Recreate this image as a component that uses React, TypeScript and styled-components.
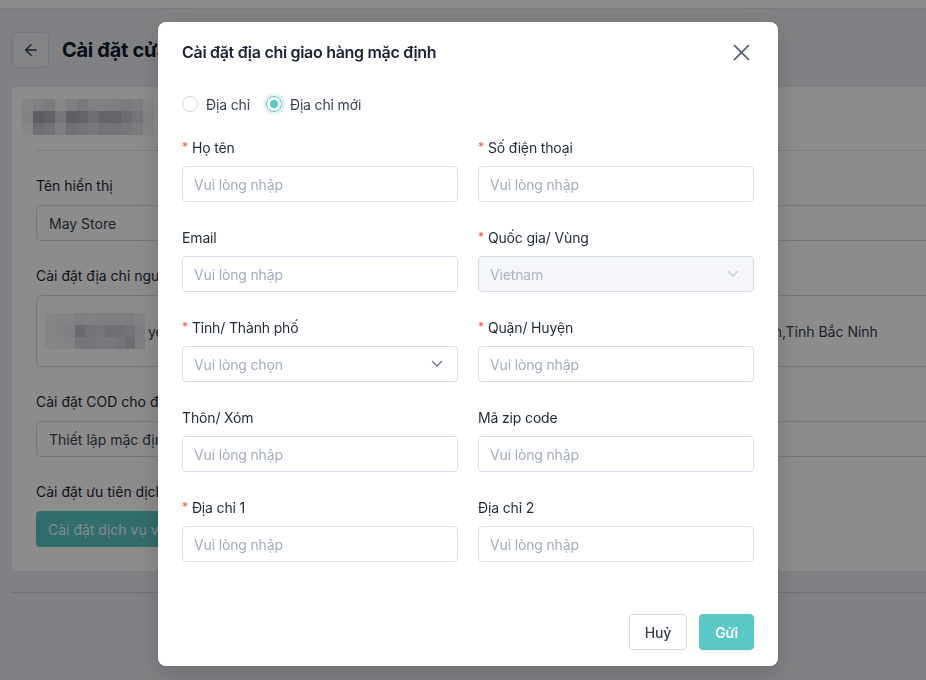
import styled, { createGlobalStyle } from 'styled-components';

const GlobalStyle = createGlobalStyle`
  html, body {
    margin: 0;
    padding: 0;
    overflow: hidden;
    background: #e9ecf1;
  }
  body {
    font-family: Inter, "Noto Sans", "Liberation Sans", sans-serif;
    color: #1f2937;
    -webkit-font-smoothing: antialiased;
  }
  * { box-sizing: border-box; }
`;

const TEAL = '#5ac8c4';

/* ---------- page behind the dialog ---------- */

const Page = styled.div`
  width: 1180px;
  height: 680px;
  background: #e9ecf1;
`;

const TopBar = styled.div`
  height: 9px;
  background: #fff;
  border-bottom: 1px solid #dde2e8;
`;

const Main = styled.main`
  padding: 23px 0 0 12px;
`;

const TitleRow = styled.div`
  display: flex;
  align-items: center;
  gap: 13px;
  height: 36px;
`;

const BackButton = styled.button`
  width: 37px;
  height: 36px;
  display: flex;
  align-items: center;
  justify-content: center;
  background: #eef0f4;
  border: 1px solid #d3d9e2;
  border-radius: 4px;
  color: #374151;
  padding: 0;
`;

const PageTitle = styled.h1`
  margin: 0;
  font-size: 20px;
  font-weight: 700;
  letter-spacing: -0.3px;
  color: #111827;
`;

const Card = styled.section`
  margin-top: 19px;
  background: #fff;
  border-radius: 4px;
`;

const CardHead = styled.div`
  padding-top: 12px;
  height: 64px;
  margin-left: 24px;
  border-bottom: 1px solid #e3e6ea;
  & > * {
    margin-left: -14px;
  }
`;

const Mosaic = styled.div<{ $cols: number; $cell: number }>`
  display: grid;
  grid-template-columns: repeat(${(p) => p.$cols}, ${(p) => p.$cell}px);
  grid-auto-rows: 12px;
  flex-shrink: 0;
`;

const Cell = styled.span<{ $c: string }>`
  background: ${(p) => p.$c};
`;

const CardBody = styled.div`
  padding: 25px 24px 24px;
  display: flex;
  flex-direction: column;
`;

const BgLabel = styled.div`
  font-size: 14px;
  line-height: 20px;
  color: #1f2937;
  margin-bottom: 9px;
`;

const BgInput = styled.div<{ $tall?: boolean }>`
  height: ${(p) => (p.$tall ? '72px' : '36px')};
  border: 1px solid #d3dbe6;
  border-radius: ${(p) => (p.$tall ? '6px' : '4px')};
  display: flex;
  align-items: center;
  padding: 0 ${(p) => (p.$tall ? '8px' : '12px')};
  font-size: 14px;
  color: #374151;
  white-space: nowrap;
  overflow: hidden;
  margin-bottom: 25px;
`;

const AddressText = styled.span`
  margin-left: 3px;
`;

const BgButton = styled.div`
  height: 36px;
  width: 240px;
  background: ${TEAL};
  color: #eefaf9;
  border-radius: 4px;
  display: flex;
  align-items: center;
  padding: 0 12px;
  font-size: 14px;
`;

const BottomRule = styled.div`
  margin-top: 21px;
  height: 1px;
  background: #c9ced6;
`;

/* ---------- dialog ---------- */

const Overlay = styled.div`
  position: fixed;
  inset: 0;
  background: rgba(0, 0, 0, 0.45);
  display: flex;
  justify-content: center;
  align-items: flex-start;
  padding: 22px 0 0 10px;
`;

const Dialog = styled.div`
  width: 620px;
  height: 644px;
  background: #fff;
  border-radius: 8px;
  box-shadow: 0 8px 28px rgba(0, 0, 0, 0.18);
  padding: 18px 24px 16px;
  display: flex;
  flex-direction: column;
  letter-spacing: -0.15px;
`;

const DialogHead = styled.div`
  display: flex;
  align-items: center;
  justify-content: space-between;
  height: 24px;
`;

const DialogTitle = styled.h2`
  margin: 0;
  font-size: 16px;
  font-weight: 600;
  letter-spacing: -0.3px;
  color: #1a2233;
`;

const CloseButton = styled.button`
  width: 24px;
  height: 24px;
  margin-right: 1px;
  padding: 0;
  border: 0;
  background: none;
  display: flex;
  align-items: center;
  justify-content: center;
  color: #4b5563;
`;

const RadioGroup = styled.div`
  display: flex;
  align-items: center;
  gap: 16px;
  margin-top: 30px;
  height: 20px;
`;

const RadioOption = styled.label`
  display: flex;
  align-items: center;
  gap: 8px;
  font-size: 14px;
  color: #374151;
`;

const RadioDot = styled.span<{ $on?: boolean }>`
  width: 16px;
  height: 16px;
  border-radius: 50%;
  border: 1px solid ${(p) => (p.$on ? TEAL : '#cfd8e3')};
  background: #fff;
  display: flex;
  align-items: center;
  justify-content: center;
  box-shadow: ${(p) => (p.$on ? '0 0 0 3px rgba(90, 200, 196, 0.16)' : 'none')};
  &::after {
    content: '';
    width: 8px;
    height: 8px;
    border-radius: 50%;
    background: ${(p) => (p.$on ? TEAL : 'transparent')};
  }
`;

const FormGrid = styled.div`
  margin-top: 23px;
  display: grid;
  grid-template-columns: 276px 276px;
  column-gap: 20px;
  row-gap: 25px;
`;

const Field = styled.div`
  display: flex;
  flex-direction: column;
`;

const Label = styled.div`
  display: flex;
  align-items: center;
  height: 20px;
  font-size: 14px;
  color: #1f2937;
  margin-bottom: 9px;
`;

const Star = styled.span`
  color: #f5543a;
  font-size: 12px;
  margin-right: 4px;
  position: relative;
  top: -1px;
`;

const Input = styled.input`
  height: 36px;
  width: 100%;
  border: 1px solid #d3dde9;
  border-radius: 4px;
  padding: 0 11px;
  font-family: inherit;
  font-size: 14px;
  letter-spacing: -0.15px;
  color: #1f2937;
  outline: none;
  &::placeholder {
    color: #a3acb9;
  }
`;

const SelectBox = styled.div<{ $disabled?: boolean }>`
  height: 36px;
  border: 1px solid #d3dde9;
  border-radius: 4px;
  padding: 0 14px 0 11px;
  display: flex;
  align-items: center;
  justify-content: space-between;
  font-size: 14px;
  background: ${(p) => (p.$disabled ? '#f4f6fa' : '#fff')};
  color: ${(p) => (p.$disabled ? '#a9b3c1' : '#a3acb9')};
`;

const Footer = styled.div`
  margin-top: auto;
  display: flex;
  justify-content: flex-end;
  gap: 12px;
`;

const Button = styled.button<{ $primary?: boolean }>`
  height: 36px;
  padding: 0 15px;
  border-radius: 4px;
  font-family: inherit;
  font-size: 14px;
  letter-spacing: -0.15px;
  font-weight: ${(p) => (p.$primary ? 600 : 500)};
  border: 1px solid ${(p) => (p.$primary ? TEAL : '#cfdbe8')};
  background: ${(p) => (p.$primary ? TEAL : '#fff')};
  color: ${(p) => (p.$primary ? '#fff' : '#374151')};
  box-shadow: ${(p) => (p.$primary ? '0 2px 4px rgba(0,0,0,0.06)' : 'none')};
`;

const Chevron = ({ color }: { color: string }) => (
  <svg width="12" height="8" viewBox="0 0 12 8" fill="none">
    <path d="M1.5 1.5L6 6L10.5 1.5" stroke={color} strokeWidth="1.3" strokeLinecap="round" strokeLinejoin="round" />
  </svg>
);

const headMosaic = [
  '#f0f1f4', '#e9eaee', '#dfe0e6', '#f4f4f6', '#e8e9ed', '#dcdde3', '#e6e7eb', '#e9eaee', '#e4e5ea', '#dfe0e5', '#e6e7eb', '#f7f7f8',
  '#eceef1', '#a9acb9', '#b2b4bf', '#d7d9e0', '#aeb0bc', '#b4b6c1', '#c7c9d1', '#b6b8c3', '#b5b7c2', '#c5c7cf', '#d4d6dd', '#f2f2f4',
  '#f3f4f6', '#c6c8d0', '#d0d2d9', '#e4e5ea', '#cdced6', '#d2d4db', '#d9dae1', '#cfd1d8', '#d3d5dc', '#dadbe1', '#e3e4e9', '#f6f6f8',
];

const addrMosaic = [
  '#f4f4f6', '#eef0f3', '#eceef1', '#e4e5ea', '#e9eaee', '#e7e8ec', '#e1e3e8', '#e6e7eb', '#e3e4e9', '#eef0f2',
  '#f2f3f5', '#ecedf0', '#e9eaee', '#c3c5ce', '#cdd0d7', '#d5d7dd', '#cacdd4', '#cbcdd5', '#d1d3da', '#e4e5e9',
  '#f4f5f7', '#eff0f3', '#edeef1', '#d6d8de', '#d3d5dc', '#dadce2', '#d9dbe1', '#d4d6dc', '#c7c9d1', '#e6e7eb',
];

const fields = [
  { label: 'Họ tên', required: true },
  { label: 'Số điện thoại', required: true },
  { label: 'Email' },
  { label: 'Quốc gia/ Vùng', required: true, select: 'Vietnam', disabled: true },
  { label: 'Tỉnh/ Thành phố', required: true, select: 'Vui lòng chọn' },
  { label: 'Quận/ Huyện', required: true },
  { label: 'Thôn/ Xóm' },
  { label: 'Mã zip code' },
  { label: 'Địa chỉ 1', required: true },
  { label: 'Địa chỉ 2' },
];

const App = () => {
  return (
    <>
      <GlobalStyle />
      <Page>
        <TopBar />
        <Main>
          <TitleRow>
            <BackButton>
              <svg width="18" height="18" viewBox="0 0 24 24" fill="none" stroke="currentColor" strokeWidth="2" strokeLinecap="round" strokeLinejoin="round">
                <path d="M19 12H5" />
                <path d="M12 19l-7-7 7-7" />
              </svg>
            </BackButton>
            <PageTitle>Cài đặt cửa hàng</PageTitle>
          </TitleRow>
          <Card>
            <CardHead>
              <Mosaic $cols={12} $cell={11}>
                {headMosaic.map((c, i) => (
                  <Cell key={i} $c={c} />
                ))}
              </Mosaic>
            </CardHead>
            <CardBody>
              <BgLabel>Tên hiển thị</BgLabel>
              <BgInput>May Store</BgInput>
              <BgLabel>Cài đặt địa chỉ người gửi hàng mặc định</BgLabel>
              <BgInput $tall>
                <Mosaic $cols={10} $cell={10}>
                  {addrMosaic.map((c, i) => (
                    <Cell key={i} $c={c} />
                  ))}
                </Mosaic>
                <AddressText>
                  yên Lạc, Thôn Đông Xuyên, Xã Đông Phong, Huyện Yên Phong, Khu công nghiệp VSIP Bắc Ninh,Tỉnh Bắc Ninh
                </AddressText>
              </BgInput>
              <BgLabel>Cài đặt COD cho đơn hàng</BgLabel>
              <BgInput>Thiết lập mặc định</BgInput>
              <BgLabel>Cài đặt ưu tiên dịch vụ vận chuyển</BgLabel>
              <BgButton>Cài đặt dịch vụ vận chuyển</BgButton>
            </CardBody>
          </Card>
          <BottomRule />
        </Main>
      </Page>

      <Overlay>
        <Dialog>
          <DialogHead>
            <DialogTitle>Cài đặt địa chỉ giao hàng mặc định</DialogTitle>
            <CloseButton aria-label="Đóng">
              <svg width="17" height="17" viewBox="0 0 17 17" fill="none" stroke="currentColor" strokeWidth="1.7" strokeLinecap="round">
                <path d="M1.5 1.5L15.5 15.5" />
                <path d="M15.5 1.5L1.5 15.5" />
              </svg>
            </CloseButton>
          </DialogHead>

          <RadioGroup>
            <RadioOption>
              <RadioDot />
              Địa chỉ
            </RadioOption>
            <RadioOption>
              <RadioDot $on />
              Địa chỉ mới
            </RadioOption>
          </RadioGroup>

          <FormGrid>
            {fields.map((f) => (
              <Field key={f.label}>
                <Label>
                  {f.required && <Star>*</Star>}
                  {f.label}
                </Label>
                {f.select ? (
                  <SelectBox $disabled={f.disabled}>
                    {f.select}
                    <Chevron color={f.disabled ? '#c3cad5' : '#6b7280'} />
                  </SelectBox>
                ) : (
                  <Input placeholder="Vui lòng nhập" />
                )}
              </Field>
            ))}
          </FormGrid>

          <Footer>
            <Button>Huỷ</Button>
            <Button $primary>Gửi</Button>
          </Footer>
        </Dialog>
      </Overlay>
    </>
  );
};

export default App;
